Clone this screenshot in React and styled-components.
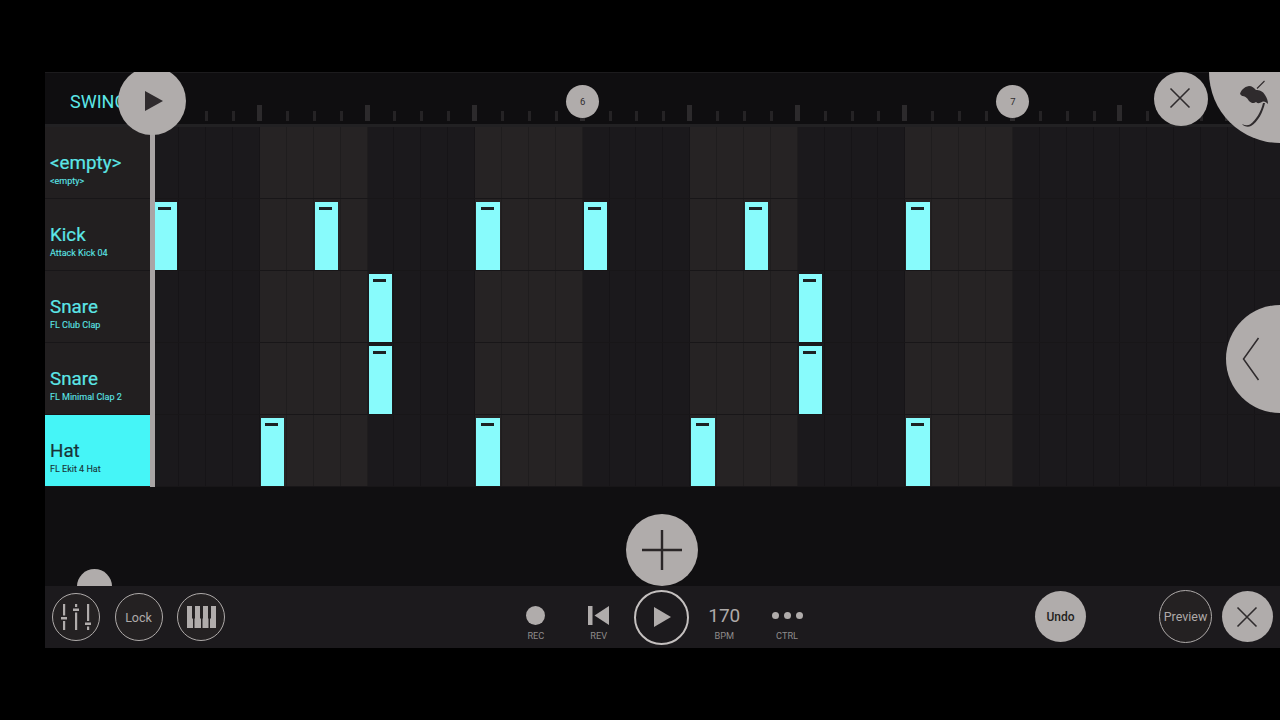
// Imports
import React from 'react';
import styled, { createGlobalStyle } from 'styled-components';

// Data
const COL_W = 26.9;
const COLS = 42;
const channels = [
	{ name: '<empty>', sample: '<empty>', notes: [] },
	{ name: 'Kick', sample: 'Attack Kick 04', notes: [0, 6, 12, 16, 22, 28] },
	{ name: 'Snare', sample: 'FL Club Clap', notes: [8, 24] },
	{ name: 'Snare', sample: 'FL Minimal Clap 2', notes: [8, 24] },
	{ name: 'Hat', sample: 'FL Ekit 4 Hat', notes: [4, 12, 20, 28], active: true },
];
const markers = { 16: '6', 32: '7' };
const columns = Array.from({ length: COLS }, (_, i) => i);

// Fonction
const App = () => {
	return (
		<Screen>
			<GlobalStyle />
			<Frame>
				<TopBar>
					<SwingCell>SWING</SwingCell>
					<Ruler>
						{columns.map((i) => (
							<RulerCell key={i}>
								{i > 1 && <Tick $major={i % 4 === 0} />}
								{markers[i] && <Marker>{markers[i]}</Marker>}
							</RulerCell>
						))}
					</Ruler>
				</TopBar>

				<Rows>
					{channels.map((channel, r) => (
						<Row key={r}>
							<Label $active={channel.active}>
								<Name>{channel.name}</Name>
								<Sample>{channel.sample}</Sample>
							</Label>
							{columns.map((i) => (
								<Cell key={i} $light={i < 32 && Math.floor(i / 4) % 2 === 1}>
									{channel.notes.includes(i) && <Note />}
								</Cell>
							))}
						</Row>
					))}
					<Playhead />
				</Rows>

				<Tray>
					<Knob />
					<AddButton aria-label="Add">
						<svg width="42" height="42" viewBox="0 0 42 42">
							<path d="M21 1V41M1 21H41" stroke="#2a2627" strokeWidth="2.4" />
						</svg>
					</AddButton>
				</Tray>

				<BottomBar>
					<LeftTools>
						<RingButton aria-label="Mixer">
							<svg width="30" height="26" viewBox="0 0 30 26" fill="#b0acab">
								<rect x="2" y="0" width="2.2" height="11.500" />
								<rect x="0" y="13" width="6" height="2.500" />
								<rect x="2" y="17" width="2.2" height="9" />
								<rect x="14" y="0" width="2.2" height="3" />
								<rect x="12" y="4.500" width="6" height="2.500" />
								<rect x="14" y="8.500" width="2.2" height="17.500" />
								<rect x="26" y="0" width="2.2" height="17" />
								<rect x="24" y="18.500" width="6" height="2.500" />
								<rect x="26" y="22.500" width="2.2" height="3.500" />
							</svg>
						</RingButton>
						<RingButton>Lock</RingButton>
						<RingButton aria-label="Piano roll">
							<svg width="29" height="22" viewBox="0 0 29 22" fill="#b0acab">
								<path d="M0 0H5V12.500H6V22H0Z" />
								<path d="M8 0H13V12.500H14V22H7.500V12.500H8Z" />
								<path d="M16 0H21V12.500H21.500V22H15.500V12.500H16Z" />
								<path d="M24 0H29V22H23V12.500H24Z" />
							</svg>
						</RingButton>
					</LeftTools>

					<Transport>
						<TransportItem $labelled>
							<IconSlot>
								<RecDot />
							</IconSlot>
							<ItemLabel>REC</ItemLabel>
						</TransportItem>
						<TransportItem $labelled>
							<IconSlot>
								<svg width="21" height="19" viewBox="0 0 21 19" fill="#b0acab">
									<rect x="0" y="0" width="4.500" height="19" />
									<path d="M21 0V19L6.500 9.500Z" />
								</svg>
							</IconSlot>
							<ItemLabel>REV</ItemLabel>
						</TransportItem>
						<TransportItem>
							<PlayRing aria-label="Play">
								<svg width="17" height="20" viewBox="0 0 17 20" fill="#b0acab">
									<path d="M0 0L17 10L0 20Z" />
								</svg>
							</PlayRing>
						</TransportItem>
						<TransportItem $labelled>
							<IconSlot>
								<Bpm>170</Bpm>
							</IconSlot>
							<ItemLabel>BPM</ItemLabel>
						</TransportItem>
						<TransportItem $labelled>
							<IconSlot>
								<Dots>
									<Dot />
									<Dot />
									<Dot />
								</Dots>
							</IconSlot>
							<ItemLabel>CTRL</ItemLabel>
						</TransportItem>
					</Transport>

					<RightTools>
						<FillButton $gap={73}>Undo</FillButton>
						<RingButton $size={53} $gap={10} $text={12.5}>Preview</RingButton>
						<FillButton aria-label="Close" $nudge>
							<svg width="22" height="22" viewBox="0 0 22 22">
								<path d="M1.500 1.500L20.500 20.500M20.500 1.500L1.500 20.500" stroke="#2f2b2d" strokeWidth="1.600" />
							</svg>
						</FillButton>
					</RightTools>
				</BottomBar>

				{/* Boutons flottants */}
				<PlayFloat aria-label="Play">
					<svg width="18" height="20" viewBox="0 0 18 20" fill="#2f2b2d">
						<path d="M0 0L18 10L0 20Z" />
					</svg>
				</PlayFloat>
				<CloseFloat aria-label="Close">
					<svg width="22" height="22" viewBox="0 0 22 22">
						<path d="M1.500 1.500L20.500 20.500M20.500 1.500L1.500 20.500" stroke="#2f2b2d" strokeWidth="1.600" />
					</svg>
				</CloseFloat>
				<LogoFloat aria-label="FL Studio">
					<svg width="50" height="60" viewBox="0 0 50 60">
						<path
							d="M10 22C11 18 14 15 19 14C22 14 24 16 26 18C29 18 33 19 35 23C37 26 38 29 38 32C36 30 34 29 32 30C30 31 28 32 26 30C24 32 21 31 19 29C17 25 14 24 12 24Z"
							fill="#2f2b2d"
						/>
						<path d="M27 16.500L34.500 9" stroke="#2f2b2d" strokeWidth="1.100" fill="none" />
						<path d="M35 31C33 40 28 50 21 54C18 55.500 14 54.500 12 52C15 53.500 18 53.500 20 52.500C26 48 31 40 33 31Z" fill="#2f2b2d" />
					</svg>
				</LogoFloat>
				<SideFloat aria-label="Open panel">
					<svg width="18" height="44" viewBox="0 0 18 44">
						<path d="M16.500 1L1.500 22L16.500 43" stroke="#2f2b2d" strokeWidth="1.500" fill="none" />
					</svg>
				</SideFloat>
			</Frame>
		</Screen>
	);
};

// Styled components
const GlobalStyle = createGlobalStyle`
	html, body {
		margin: 0;
		background: #000;
		font-family: Roboto, "Liberation Sans", sans-serif;
	}
`;

const Screen = styled.div`
	width: 1280px;
	height: 720px;
	padding: 72px 0 72px 45px;
	box-sizing: border-box;
	overflow: hidden;
	background: #000;
`;

const Frame = styled.div`
	position: relative;
	height: 576px;
	overflow: hidden;
	display: flex;
	flex-direction: column;
	background: #100f11;
`;

const TopBar = styled.div`
	display: flex;
	height: 55px;
	box-sizing: border-box;
	flex: none;
	background: #0f0e10;
	border-top: 1px solid #1c1b1d;
	border-bottom: 3px solid #222123;
`;

const SwingCell = styled.div`
	width: 107.4px;
	flex: none;
	box-sizing: border-box;
	padding: 18px 0 0 25px;
	font-size: 18px;
	line-height: 21px;
	color: #5ce6e7;
	white-space: nowrap;
`;

const Ruler = styled.div`
	display: flex;
	align-items: flex-end;
	padding-bottom: 3px;
`;

const RulerCell = styled.div`
	position: relative;
	width: ${COL_W}px;
	height: 18px;
	flex: none;
	display: flex;
	align-items: flex-end;
`;

const Tick = styled.div`
	width: ${(p) => (p.$major ? 5 : 3)}px;
	height: ${(p) => (p.$major ? 16 : 10)}px;
	margin-left: ${(p) => (p.$major ? -3 : -1)}px;
	background: ${(p) => (p.$major ? '#2c2a2c' : '#252325')};
`;

const Marker = styled.div`
	position: absolute;
	left: -16.500px;
	top: -18px;
	width: 33px;
	height: 33px;
	border-radius: 50%;
	background: #b0acab;
	color: #2f2b2d;
	font-size: 9.500px;
	display: flex;
	align-items: center;
	justify-content: center;
`;

const Rows = styled.div`
	position: relative;
	height: 360px;
	flex: none;
`;

const Row = styled.div`
	display: flex;
	height: 72px;
	box-sizing: border-box;
	border-bottom: 1px solid #181618;
`;

const Label = styled.div`
	width: 107.4px;
	flex: none;
	box-sizing: border-box;
	display: flex;
	flex-direction: column;
	justify-content: flex-end;
	padding: 0 0 11px 5px;
	background: ${(p) => (p.$active ? '#45f5f7' : '#221f20')};
	color: ${(p) => (p.$active ? '#193336' : '#5ce6e7')};
`;

const Name = styled.div`
	font-size: 18.800px;
	line-height: 24px;
	-webkit-text-stroke: 0.2px currentColor;
`;

const Sample = styled.div`
	font-size: 9px;
	line-height: 12px;
	-webkit-text-stroke: 0.1px currentColor;
`;

const Cell = styled.div`
	position: relative;
	width: ${COL_W}px;
	flex: none;
	box-sizing: border-box;
	border-right: 1px solid rgba(0, 0, 0, 0.16);
	background: ${(p) => (p.$light ? '#262324' : '#1b191c')};
`;

const Note = styled.div`
	position: absolute;
	top: 2.500px;
	bottom: 0.500px;
	left: 1px;
	width: 23.500px;
	box-sizing: border-box;
	background: #88fbfc;
	&::before {
		content: '';
		position: absolute;
		top: 5px;
		left: 4.500px;
		width: 13px;
		height: 3px;
		background: #1c2224;
	}
`;

const Playhead = styled.div`
	position: absolute;
	top: 0;
	bottom: 0;
	left: 105px;
	width: 4.500px;
	background: #a9a5a5;
`;

const Tray = styled.div`
	position: relative;
	flex: 1;
	overflow: hidden;
`;

const Knob = styled.div`
	position: absolute;
	left: 32px;
	bottom: -17.500px;
	width: 35px;
	height: 35px;
	border-radius: 50%;
	background: #b0acab;
`;

const Round = styled.button`
	display: flex;
	align-items: center;
	justify-content: center;
	padding: 0;
	border: none;
	border-radius: 50%;
	flex: none;
	font-family: inherit;
`;

const AddButton = styled(Round)`
	position: absolute;
	left: 581px;
	top: 27px;
	width: 72px;
	height: 72px;
	background: #b0acab;
`;

const BottomBar = styled.div`
	display: grid;
	grid-template-columns: 459.500px 314px 1fr;
	align-items: center;
	height: 62px;
	flex: none;
	background: #1c1a1d;
`;

const LeftTools = styled.div`
	display: flex;
	gap: 14.500px;
	padding-left: 7px;
`;

const RingButton = styled(Round)`
	width: ${(p) => p.$size || 48}px;
	height: ${(p) => p.$size || 48}px;
	margin-right: ${(p) => p.$gap || 0}px;
	box-sizing: border-box;
	border: 1.800px solid #aeaaa9;
	background: #242122;
	color: #aeaaa9;
	font-size: ${(p) => p.$text || 12.500}px;
`;

const Transport = styled.div`
	display: grid;
	grid-template-columns: repeat(5, 1fr);
	height: 100%;
`;

const TransportItem = styled.div`
	display: flex;
	flex-direction: column;
	align-items: center;
	justify-content: center;
	padding-top: ${(p) => (p.$labelled ? 12 : 0)}px;
	box-sizing: border-box;
`;

const IconSlot = styled.div`
	height: 22px;
	display: flex;
	align-items: center;
	justify-content: center;
`;

const ItemLabel = styled.div`
	margin-top: 4px;
	font-size: 9.200px;
	line-height: 12px;
	color: #8f8b8b;
`;

const RecDot = styled.div`
	width: 19px;
	height: 19px;
	border-radius: 50%;
	background: #b0acab;
`;

const PlayRing = styled(Round)`
	width: 55px;
	height: 55px;
	padding-left: 3px;
	box-sizing: border-box;
	border: 2px solid #c4c0bf;
	background: transparent;
`;

const Bpm = styled.div`
	font-size: 19px;
	color: #aeaaa9;
`;

const Dots = styled.div`
	display: flex;
	gap: 5px;
`;

const Dot = styled.div`
	width: 7px;
	height: 7px;
	border-radius: 50%;
	background: #b0acab;
`;

const RightTools = styled.div`
	display: flex;
	align-items: center;
	justify-content: flex-end;
	padding: 0 7px 1px 0;
`;

const FillButton = styled(Round)`
	width: 51px;
	height: 51px;
	margin-right: ${(p) => p.$gap || 0}px;
	padding-right: ${(p) => (p.$nudge ? 1 : 0)}px;
	background: #b0acab;
	color: #231f20;
	font-size: 12px;
	font-weight: 500;
`;

const PlayFloat = styled(Round)`
	position: absolute;
	left: 73px;
	top: -5px;
	width: 68px;
	height: 68px;
	padding-left: 3px;
	background: #b0acab;
`;

const CloseFloat = styled(Round)`
	position: absolute;
	left: 1109px;
	top: 0;
	width: 54px;
	height: 54px;
	padding: 0 2px 2px 0;
	background: #b0acab;
`;

const LogoFloat = styled.div`
	position: absolute;
	left: 1164px;
	top: -71px;
	width: 142px;
	height: 142px;
	border-radius: 50%;
	background: #b0acab;
	svg {
		position: absolute;
		left: 21px;
		top: 71px;
	}
`;

const SideFloat = styled(Round)`
	position: absolute;
	left: 1180.500px;
	top: 233px;
	width: 108px;
	height: 108px;
	justify-content: flex-start;
	padding-left: 16px;
	background: #b0acab;
`;

// Export
export default App;
